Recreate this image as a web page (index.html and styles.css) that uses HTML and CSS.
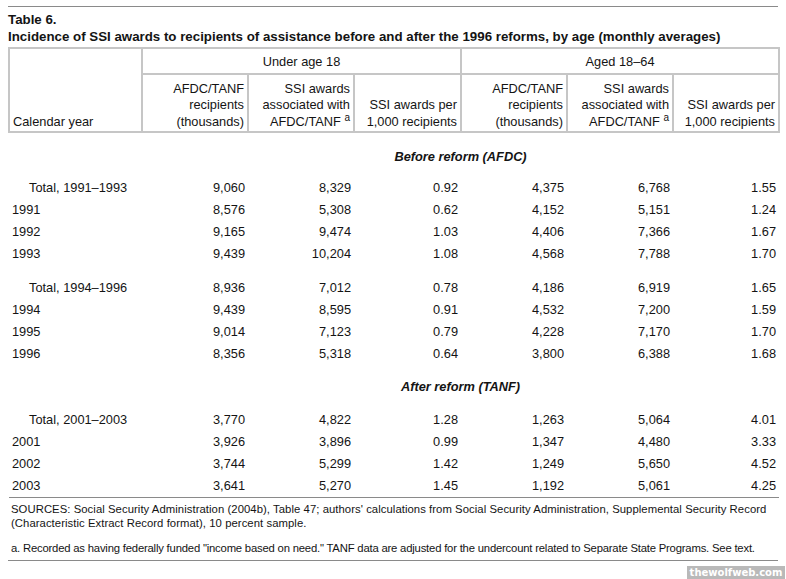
FILE: index.html
```html
<!DOCTYPE html>
<html lang="en">
<head>
<meta charset="utf-8">
<title>Table 6</title>
<link rel="stylesheet" href="styles.css">
</head>
<body>
<div class="page">
  <div class="rule-top"></div>
  <h1 class="caption">
    <span class="caption-line">Table 6.</span>
    <span class="caption-line">Incidence of SSI awards to recipients of assistance before and after the 1996 reforms, by age (monthly averages)</span>
  </h1>
  <table class="data">
    <colgroup>
      <col class="c-year">
      <col class="c-num"><col class="c-num"><col class="c-num-w">
      <col class="c-num"><col class="c-num"><col class="c-num">
    </colgroup>
    <thead>
      <tr class="head-top">
        <th class="year" rowspan="2">Calendar year</th>
        <th class="group" colspan="3">Under age 18</th>
        <th class="group" colspan="3">Aged 18–64</th>
      </tr>
      <tr class="head-sub">
        <th>AFDC/TANF<br>recipients<br>(thousands)</th>
        <th>SSI awards<br>associated with<br>AFDC/TANF <sup>a</sup></th>
        <th>SSI awards per<br>1,000 recipients</th>
        <th>AFDC/TANF<br>recipients<br>(thousands)</th>
        <th>SSI awards<br>associated with<br>AFDC/TANF <sup>a</sup></th>
        <th>SSI awards per<br>1,000 recipients</th>
      </tr>
    </thead>
    <tbody>
      <tr class="section first"><td></td><td colspan="6">Before reform (AFDC)</td></tr>
      <tr class="total"><td class="label">Total, 1991–1993</td><td>9,060</td><td>8,329</td><td>0.92</td><td>4,375</td><td>6,768</td><td>1.55</td></tr>
      <tr><td class="label">1991</td><td>8,576</td><td>5,308</td><td>0.62</td><td>4,152</td><td>5,151</td><td>1.24</td></tr>
      <tr><td class="label">1992</td><td>9,165</td><td>9,474</td><td>1.03</td><td>4,406</td><td>7,366</td><td>1.67</td></tr>
      <tr><td class="label">1993</td><td>9,439</td><td>10,204</td><td>1.08</td><td>4,568</td><td>7,788</td><td>1.70</td></tr>
      <tr class="total spaced"><td class="label">Total, 1994–1996</td><td>8,936</td><td>7,012</td><td>0.78</td><td>4,186</td><td>6,919</td><td>1.65</td></tr>
      <tr><td class="label">1994</td><td>9,439</td><td>8,595</td><td>0.91</td><td>4,532</td><td>7,200</td><td>1.59</td></tr>
      <tr><td class="label">1995</td><td>9,014</td><td>7,123</td><td>0.79</td><td>4,228</td><td>7,170</td><td>1.70</td></tr>
      <tr><td class="label">1996</td><td>8,356</td><td>5,318</td><td>0.64</td><td>3,800</td><td>6,388</td><td>1.68</td></tr>
      <tr class="section"><td></td><td colspan="6">After reform (TANF)</td></tr>
      <tr class="total"><td class="label">Total, 2001–2003</td><td>3,770</td><td>4,822</td><td>1.28</td><td>1,263</td><td>5,064</td><td>4.01</td></tr>
      <tr><td class="label">2001</td><td>3,926</td><td>3,896</td><td>0.99</td><td>1,347</td><td>4,480</td><td>3.33</td></tr>
      <tr><td class="label">2002</td><td>3,744</td><td>5,299</td><td>1.42</td><td>1,249</td><td>5,650</td><td>4.52</td></tr>
      <tr class="last"><td class="label">2003</td><td>3,641</td><td>5,270</td><td>1.45</td><td>1,192</td><td>5,061</td><td>4.25</td></tr>
    </tbody>
  </table>
  <div class="notes">
    <p class="note note-source">SOURCES: Social Security Administration (2004b), Table 47; authors' calculations from Social Security Administration, Supplemental Security Record (Characteristic Extract Record format), 10 percent sample.</p>
    <p class="note note-a">a. Recorded as having federally funded "income based on need." TANF data are adjusted for the undercount related to Separate State Programs. See text.</p>
  </div>
</div>
<div class="watermark">thewolfweb.com</div>
</body>
</html>
```

FILE: styles.css
```css
html, body {
  margin: 0;
  padding: 0;
  background: #ffffff;
}

body {
  font-family: "Liberation Sans", Arial, sans-serif;
  color: #141414;
  width: 786px;
  height: 579px;
  position: relative;
  overflow: hidden;
}

.page {
  padding: 6px 8px 0 8px;
  width: 770px;
}

.rule-top {
  border-top: 1px solid #8a8a8a;
}

.caption {
  margin: 4px 0 2px 0;
  font-size: 13.3px;
  font-weight: bold;
  line-height: 17px;
  color: #141414;
}

.caption-line {
  display: block;
}

.data {
  width: 770px;
  table-layout: fixed;
  border-collapse: collapse;
  font-size: 12.8px;
}

.c-year { width: 133px; }
.c-num { width: 106px; }
.c-num-w { width: 107px; }

.data th {
  border: 2px solid #c6c6c6;
  font-weight: normal;
  text-align: right;
  vertical-align: bottom;
  line-height: 16.5px;
  padding: 0 3px 1px 3px;
}

.data th.year {
  text-align: left;
  padding-left: 3px;
}

.data th.group {
  text-align: center;
  vertical-align: middle;
}

.head-top th.group {
  height: 22px;
  padding: 2px 3px 0 3px;
}

.head-sub th {
  height: 55px;
}

.data sup {
  font-size: 10px;
  line-height: 0;
  vertical-align: 5px;
}

.data td {
  padding: 0 3px 0 3px;
  height: 22px;
  line-height: 22px;
  text-align: right;
  white-space: nowrap;
}

.data td.label {
  text-align: left;
}

.data tr.total td.label {
  padding-left: 20px;
}

.data tr.spaced td {
  padding-top: 12px;
}

.data tr.section td {
  text-align: center;
  font-weight: bold;
  font-style: italic;
  padding-top: 11px;
  padding-bottom: 11px;
}

.data tr.section.first td {
  padding-top: 13px;
  padding-bottom: 9px;
}

.data tr.last td {
  border-bottom: 1px solid #8a8a8a;
}

.notes {
  padding: 4px 0 5px 3px;
  border-bottom: 1px solid #8a8a8a;
}

.note {
  margin: 0;
  font-size: 11.3px;
  line-height: 14px;
}

.note-source {
  letter-spacing: 0.06px;
}

.note-a {
  letter-spacing: -0.2px;
  white-space: nowrap;
}

.note + .note {
  margin-top: 11px;
}

.watermark {
  position: absolute;
  right: 1px;
  bottom: 0;
  width: 98px;
  height: 13px;
  background: #b9b9b9;
  color: #ffffff;
  font-family: "DejaVu Sans", Verdana, sans-serif;
  font-weight: bold;
  font-size: 10px;
  line-height: 13px;
  text-align: center;
}
```
